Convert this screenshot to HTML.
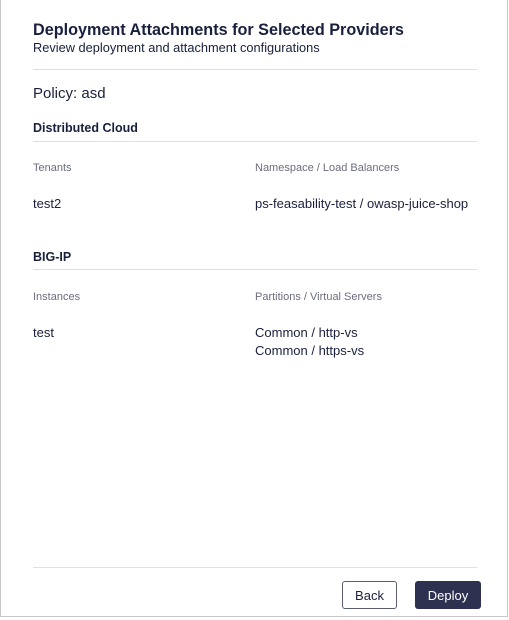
<!DOCTYPE html>
<html><head><style>
body{margin:0;width:509px;height:620px;background:#fff;font-family:"Liberation Sans",sans-serif;color:#1a1f3d;position:relative;overflow:hidden}
.frame{position:absolute;left:0;top:0;width:506px;height:616px;border:1px solid #c8c8c8;border-top:none}
.t{position:absolute;white-space:nowrap;line-height:1}
.hr{position:absolute;left:33px;width:444px;height:1px;background:#e0e0e4}
.lbl{font-size:11px;color:#6b6e7e}
.v{font-size:13px}
.btn{position:absolute;top:581px;height:28px;border-radius:3px;font-size:13px;display:flex;align-items:center;justify-content:center;box-sizing:border-box}
</style></head><body>
<div class="frame"></div>
<div class="t" style="left:33px;top:22px;font-size:16.2px;font-weight:bold">Deployment Attachments for Selected Providers</div>
<div class="t" style="left:33px;top:42px;font-size:12.8px">Review deployment and attachment configurations</div>
<div class="hr" style="top:69px"></div>
<div class="t" style="left:33px;top:86px;font-size:15px">Policy: asd</div>
<div class="t" style="left:33px;top:122px;font-size:12.5px;font-weight:bold">Distributed Cloud</div>
<div class="hr" style="top:141px"></div>
<div class="t lbl" style="left:33px;top:163px">Tenants</div>
<div class="t lbl" style="left:255px;top:163px">Namespace / Load Balancers</div>
<div class="t v" style="left:33px;top:197px">test2</div>
<div class="t v" style="left:255px;top:197px">ps-feasability-test / owasp-juice-shop</div>
<div class="t" style="left:33px;top:251px;font-size:12.5px;font-weight:bold">BIG-IP</div>
<div class="hr" style="top:269px"></div>
<div class="t lbl" style="left:33px;top:292px">Instances</div>
<div class="t lbl" style="left:255px;top:292px">Partitions / Virtual Servers</div>
<div class="t v" style="left:33px;top:326px">test</div>
<div class="t v" style="left:255px;top:326px">Common / http-vs</div>
<div class="t v" style="left:255px;top:344px">Common / https-vs</div>
<div class="hr" style="top:567px"></div>
<div class="btn" style="left:342px;width:55px;border:1px solid #5a5d6e;background:#fff;color:#1a1f3d">Back</div>
<div class="btn" style="left:415px;width:66px;background:#2f3151;color:#fff">Deploy</div>
</body></html>
